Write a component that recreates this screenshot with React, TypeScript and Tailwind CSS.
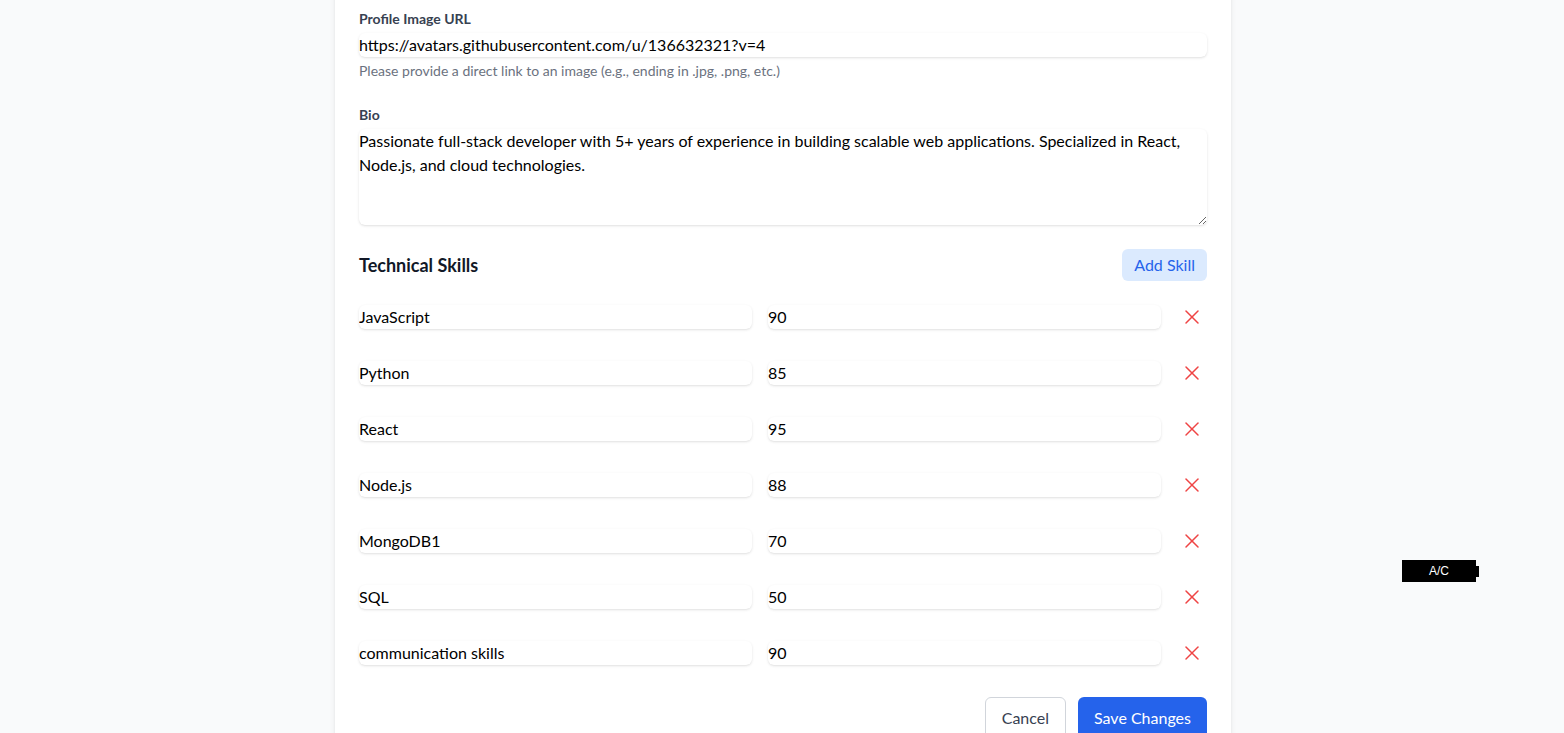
import { X } from 'lucide-react';

const skills = [
    { name: 'JavaScript', level: 90 },
    { name: 'Python', level: 85 },
    { name: 'React', level: 95 },
    { name: 'Node.js', level: 88 },
    { name: 'MongoDB1', level: 70 },
    { name: 'SQL', level: 50 },
    { name: 'communication skills', level: 90 },
];

const inputCls = 'block w-full h-6 rounded-md shadow-sm bg-white text-base leading-6 text-black outline-none';

const App = () => {
    return (
        <div className="relative min-h-screen bg-[#f9fafb] font-['Lato','Liberation_Sans',sans-serif] overflow-hidden">
            <div className="w-[896px] ml-[335px] -mt-4 bg-white rounded-lg shadow-md px-6 pt-[25px] pb-10">
                <div className="space-y-6">
                    <div>
                        <label className="block text-sm font-bold text-[#374151] mb-1">Profile Image URL</label>
                        <input className={inputCls} defaultValue="https://avatars.githubusercontent.com/u/136632321?v=4" />
                        <p className="mt-1 text-sm text-[#6b7280]">Please provide a direct link to an image (e.g., ending in .jpg, .png, etc.)</p>
                    </div>

                    <div>
                        <label className="block text-sm font-bold text-[#374151] mb-1">Bio</label>
                        <textarea
                            rows={4}
                            className="block w-full rounded-md shadow-sm bg-white text-base leading-6 text-black outline-none"
                            defaultValue="Passionate full-stack developer with 5+ years of experience in building scalable web applications. Specialized in React, Node.js, and cloud technologies."
                        />
                    </div>

                    <div>
                        <div className="flex items-center justify-between mb-6">
                            <h3 className="text-lg font-bold text-[#111827]">Technical Skills</h3>
                            <button className="px-3 py-1 rounded-md bg-[#dbeafe] text-[#2563eb] text-base leading-6">Add Skill</button>
                        </div>
                        <div className="space-y-8">
                            {skills.map((s, i) => (
                                <div key={i} className="flex items-center gap-4">
                                    <input className={inputCls + ' flex-1'} defaultValue={s.name} />
                                    <input className={inputCls + ' flex-1'} defaultValue={String(s.level)} />
                                    <button className="w-[30px] flex justify-center text-[#ef4444]">
                                        <X size={24} strokeWidth={1.5} />
                                    </button>
                                </div>
                            ))}
                        </div>
                    </div>
                </div>

                <div className="flex justify-end gap-3 mt-8">
                    <button className="px-4 py-2 rounded-md border border-[#d1d5db] text-[#374151] text-base leading-6">Cancel</button>
                    <button className="px-4 py-2 rounded-md bg-[#2563eb] text-white text-base leading-6">Save Changes</button>
                </div>
            </div>

            <div className="absolute left-[1402px] top-[560px] flex items-center">
                <div className="w-[74px] h-[22px] bg-black text-white text-xs flex items-center justify-center font-['Liberation_Sans',sans-serif]">A/C</div>
                <div className="w-[3px] h-[11px] bg-black" />
            </div>
        </div>
    );
};

export default App;
